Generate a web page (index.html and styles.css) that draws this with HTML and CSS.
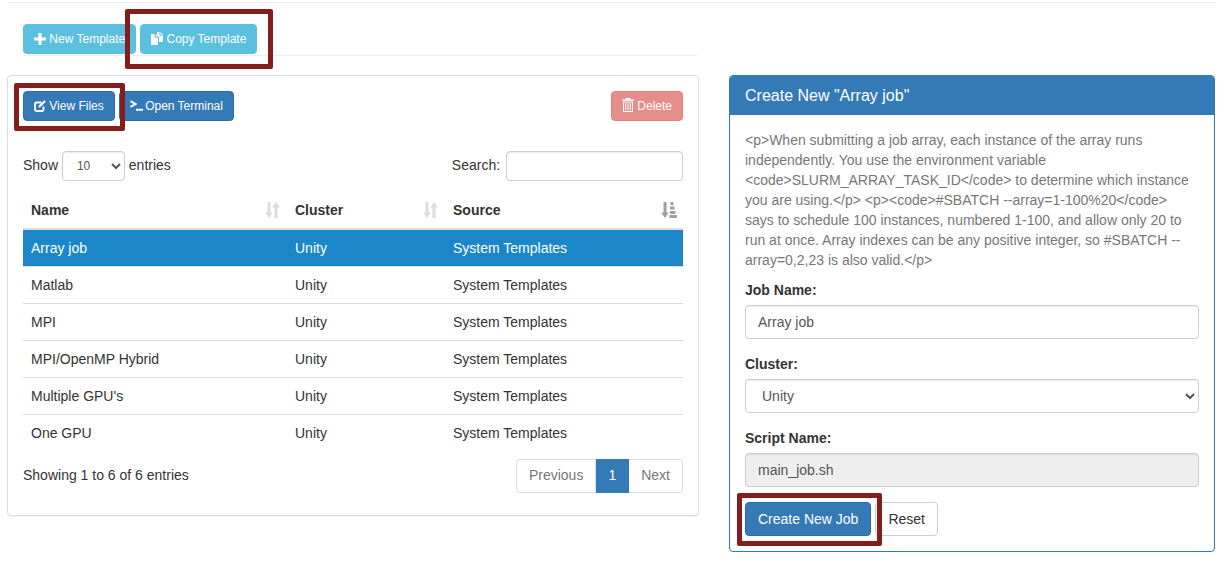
FILE: index.html
```html
<!DOCTYPE html>
<html lang="en">
<head>
<meta charset="utf-8">
<title>Create New Job</title>
<link rel="stylesheet" href="styles.css">
</head>
<body>
<hr class="top-rule">
<div class="toolbar">
  <button class="btn btn-sm btn-info"><svg class="ico" viewBox="0 0 12 12"><path d="M4.400 0h3.200v4.400H12v3.200H7.600V12H4.400V7.600H0V4.400h4.400z" fill="currentColor"/></svg> New Template</button>
  <button class="btn btn-sm btn-info"><svg class="ico ico-copy" viewBox="0 0 12 13"><path d="M0 2h3.500v3.500H7V13H0zM4.500 2l2.500 2.500H4.500zM6 0h2.500v3.500H12V10H8V5L6 3zM9.500 0L12 2.500H9.500z" fill="currentColor"/></svg> Copy Template</button>
  <span class="mark mark-copy"></span>
</div>
<hr class="tool-rule">
<main class="columns">
  <section class="panel list-panel">
    <div class="actions">
      <button class="btn btn-sm btn-primary"><svg class="ico" viewBox="0 0 12 12"><path d="M7.500 2.500H2.200A1.200 1.200 0 0 0 1 3.700v6.100A1.200 1.200 0 0 0 2.200 11h6.100a1.200 1.200 0 0 0 1.200-1.200V6.500" fill="none" stroke="currentColor" stroke-width="1.800"/><path d="M10.300.3l1.500 1.500-5.300 5.300-2.100.6.600-2.100z" fill="currentColor"/></svg> View Files</button>
      <button class="btn btn-sm btn-primary"><svg class="ico ico-term" viewBox="0 0 13 12"><path d="M.5 1.200l5 2.800-5 2.800M6 9.800h7" fill="none" stroke="currentColor" stroke-width="2"/></svg> Open Terminal</button>
      <button class="btn btn-sm btn-danger faded push"><svg class="ico ico-trash" viewBox="0 0 12 14"><path d="M4 .0h4l1 1.500h3v1.200H0V1.500h3zM1 3.500h10V14H1zm1 1v8.500h8V4.500zm1.200.8h1v7h-1zm2.300 0h1v7h-1zm2.300 0h1v7h-1z" fill="currentColor" fill-rule="evenodd"/></svg> Delete</button>
      <span class="mark mark-view"></span>
    </div>
    <div class="filters">
      <label class="field-inline">Show <select class="control length"><option>10</option></select> entries</label>
      <label class="field-inline">Search: <input class="control search" type="search"></label>
    </div>
    <table class="grid">
      <colgroup><col class="c1"><col class="c2"><col class="c3"></colgroup>
      <thead>
        <tr>
          <th><span class="th-in">Name <svg class="sort" viewBox="0 0 15 16"><path d="M2.500 0h3v10.500h2.200L4 16 .3 10.500h2.200zM9.500 16V5.500H7.300L11 0l3.700 5.500h-2.200V16z" fill="currentColor"/></svg></span></th>
          <th><span class="th-in">Cluster <svg class="sort" viewBox="0 0 15 16"><path d="M2.500 0h3v10.500h2.200L4 16 .3 10.500h2.200zM9.500 16V5.500H7.300L11 0l3.700 5.500h-2.200V16z" fill="currentColor"/></svg></span></th>
          <th><span class="th-in">Source <svg class="sort sort-on" viewBox="0 0 16 16"><path d="M2.500 0h3v10.500h2.200L4 16 .3 10.500h2.200zM9.500 0h3v3h-3zM9 4.500h4.500v3H9zM9 9h5.500v3H9zM8.500 13H16v3H8.500z" fill="currentColor"/></svg></span></th>
        </tr>
      </thead>
      <tbody>
        <tr class="selected"><td>Array job</td><td>Unity</td><td>System Templates</td></tr>
        <tr><td>Matlab</td><td>Unity</td><td>System Templates</td></tr>
        <tr><td>MPI</td><td>Unity</td><td>System Templates</td></tr>
        <tr><td>MPI/OpenMP Hybrid</td><td>Unity</td><td>System Templates</td></tr>
        <tr><td>Multiple GPU's</td><td>Unity</td><td>System Templates</td></tr>
        <tr><td>One GPU</td><td>Unity</td><td>System Templates</td></tr>
      </tbody>
    </table>
    <div class="table-foot">
      <div class="info">Showing 1 to 6 of 6 entries</div>
      <nav class="pager">
        <a class="page first">Previous</a><a class="page current">1</a><a class="page last">Next</a>
      </nav>
    </div>
  </section>
  <section class="panel form-panel">
    <h2 class="panel-head">Create New "Array job"</h2>
    <div class="panel-body">
      <p class="desc">&lt;p&gt;When submitting a job array, each instance of the array runs independently. You use the environment variable &lt;code&gt;SLURM_ARRAY_TASK_ID&lt;/code&gt; to determine which instance you are using.&lt;/p&gt; &lt;p&gt;&lt;code&gt;#SBATCH --array=1-100%20&lt;/code&gt; says to schedule 100 instances, numbered 1-100, and allow only 20 to run at once. Array indexes can be any positive integer, so #SBATCH --array=0,2,23 is also valid.&lt;/p&gt;</p>
      <div class="group">
        <label class="lbl">Job Name:</label>
        <input class="control wide" value="Array job">
      </div>
      <div class="group">
        <label class="lbl">Cluster:</label>
        <select class="control wide"><option>Unity</option></select>
      </div>
      <div class="group">
        <label class="lbl">Script Name:</label>
        <input class="control wide" value="main_job.sh" readonly>
      </div>
      <div class="form-actions">
        <button class="btn btn-primary">Create New Job</button>
        <button class="btn btn-default">Reset</button>
        <span class="mark mark-create"></span>
      </div>
    </div>
  </section>
</main>
</body>
</html>
```
FILE: styles.css
```css
* { box-sizing: border-box; }
html, body { margin: 0; padding: 0; }
body {
  font-family: "Liberation Sans", Arial, sans-serif;
  font-size: 14px;
  line-height: 20px;
  color: #333;
  background: #fff;
  height: 564px;
  overflow: hidden;
}
hr { border: 0; border-top: 1px solid #eee; margin: 0; }
.top-rule { margin: 2px 12px 0 8px; }
.toolbar {
  position: relative;
  display: flex;
  gap: 4px;
  margin: 21px 0 0 23px;
  width: 260px;
}
.tool-rule { margin: 1px 531px 0 23px; }
.btn {
  display: inline-flex;
  align-items: center;
  justify-content: center;
  font: inherit;
  height: 34px;
  padding: 6px 12px;
  border: 1px solid transparent;
  border-radius: 4px;
  white-space: pre;
  cursor: pointer;
}
.btn-sm { height: 30px; padding: 5px 10px; font-size: 12px; line-height: 18px; }
.btn-info { background: #5bc0de; border-color: #5bc0de; color: #fff; }
.btn-primary { background: #337ab7; border-color: #2e6da4; color: #fff; }
.btn-danger { background: #d9534f; border-color: #d43f3a; color: #fff; }
.btn-default { background: #fff; border-color: #ccc; color: #333; }
.faded { opacity: .65; }
.ico { width: 12px; height: 12px; flex: none; }
.ico-copy { height: 13px; margin-top: -2px; }
.ico-term { width: 13px; margin-right: -1px; }
.ico-trash { height: 14px; margin-top: -2px; }
.mark { position: absolute; border: 5px solid #861d1d; border-radius: 2px; pointer-events: none; }
.mark-copy { left: 102px; top: -15px; width: 148px; height: 60px; }
.mark-view { left: 6px; top: 7px; width: 111px; height: 48px; }
.mark-create { left: -8px; top: -9px; width: 145px; height: 53px; }
.columns {
  display: grid;
  grid-template-columns: 692px 486px;
  gap: 30px;
  margin: 19px 0 0 7px;
  align-items: start;
}
.panel { background: #fff; border: 1px solid #ddd; border-radius: 4px; }
.list-panel { position: relative; height: 441px; padding: 15px; box-shadow: 0 1px 1px rgba(0,0,0,.05); }
.actions { display: flex; gap: 4px; height: 30px; }
.push { margin-left: auto; }
.filters {
  display: flex;
  justify-content: space-between;
  align-items: flex-start;
  margin-top: 30px;
  height: 30px;
}
.field-inline { display: block; font-weight: 400; white-space: pre; }
.control {
  font: inherit;
  color: #555;
  background: #fff;
  border: 1px solid #ccc;
  border-radius: 4px;
  box-shadow: inset 0 1px 1px rgba(0,0,0,.075);
}
.length { width: 63px; height: 30px; font-size: 12px; padding: 5px 10px; }
.search { width: 177px; height: 30px; padding: 5px 10px; margin-left: 2px; vertical-align: -1px; }
.wide { display: block; width: 100%; height: 34px; padding: 6px 12px; }
.wide[readonly] { background: #eee; }
.grid { width: 660px; border-collapse: collapse; table-layout: fixed; margin-top: 10px; }
.c1 { width: 264px; }
.c2 { width: 158px; }
.c3 { width: 238px; }
.grid th {
  height: 38px;
  padding: 8px;
  text-align: left;
  font-weight: 700;
  border-bottom: 2px solid #ddd;
}
.th-in { display: flex; justify-content: space-between; align-items: center; }
.sort { width: 15px; height: 16px; margin-right: -1px; color: #dcdcdc; }
.sort-on { width: 16px; color: #9e9e9e; margin-right: -2px; }
.grid td { height: 37px; padding: 8px; border-top: 1px solid #ddd; }
.grid tbody tr:first-child td { border-top: 0; height: 36px; }
.grid .selected td { background: #1b87c9; color: #fff; }
.table-foot { display: flex; justify-content: space-between; align-items: flex-start; margin-top: 7px; }
.info { padding-top: 6px; }
.pager { display: flex; }
.page {
  display: block;
  height: 34px;
  padding: 5px 12px 7px;
  color: #777;
  background: #fff;
  border: 1px solid #ddd;
  margin-left: -1px;
}
.first { border-radius: 4px 0 0 4px; }
.last { border-radius: 0 4px 4px 0; }
.current { background: #337ab7; border-color: #337ab7; color: #fff; z-index: 1; margin-left: 0; padding-left: 11px; }
.form-panel { height: 477px; border-color: #337ab7; }
.panel-head {
  margin: 0;
  height: 39px;
  padding: 10px 15px;
  background: #337ab7;
  color: #fff;
  font-size: 16px;
  font-weight: 400;
  line-height: 20px;
  border-radius: 3px 3px 0 0;
}
.panel-body { padding: 15px; }
.desc { margin: 0 0 10px; color: #777; }
.group { margin-bottom: 15px; }
.lbl { display: block; font-weight: 700; margin-bottom: 5px; }
.form-actions { position: relative; display: flex; gap: 4px; }
```
